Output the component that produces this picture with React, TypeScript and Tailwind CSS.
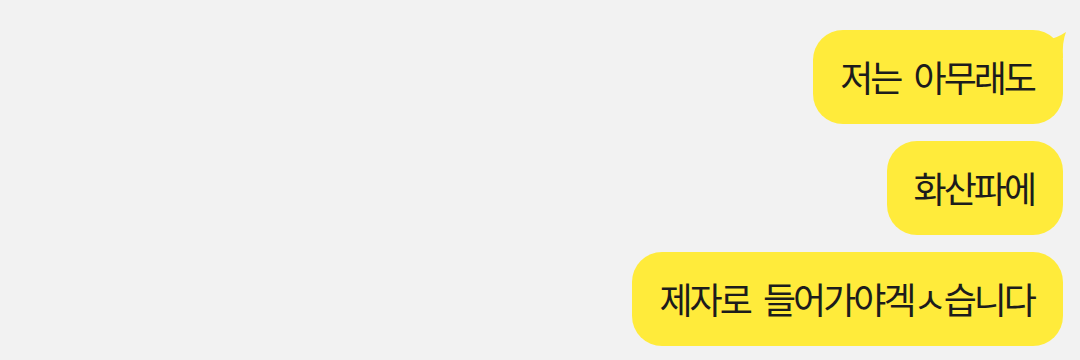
import React from 'react';

const messages = ['저는 아무래도', '화산파에', '제자로 들어가야겍ㅅ습니다'];

export default function App() {
  return (
    <div className="w-[1080px] h-[360px] bg-[#f2f2f2] overflow-hidden flex flex-col items-end gap-[17px] pt-[30px] pr-[17px]">
      {messages.map((text, i) => (
        <div
          key={i}
          className="relative h-[94px] flex items-center bg-[#ffeb3b] rounded-[30px] pl-[27px] pr-[29px] text-[36px] tracking-[-3px] [word-spacing:8px] text-[#1c1c1c] whitespace-nowrap"
          style={{ fontFamily: '"Noto Sans CJK KR", "Noto Sans", sans-serif' }}
        >
          {i === 0 && (
            <svg className="absolute -right-[4px] top-0" width="24" height="30" viewBox="0 0 24 30">
              <path d="M4 10 Q14 8 23 2 Q19 12 20 28 L4 28 Z" fill="#ffeb3b" />
            </svg>
          )}
          <span className="leading-none -mt-[3px]">{text}</span>
        </div>
      ))}
    </div>
  );
}
